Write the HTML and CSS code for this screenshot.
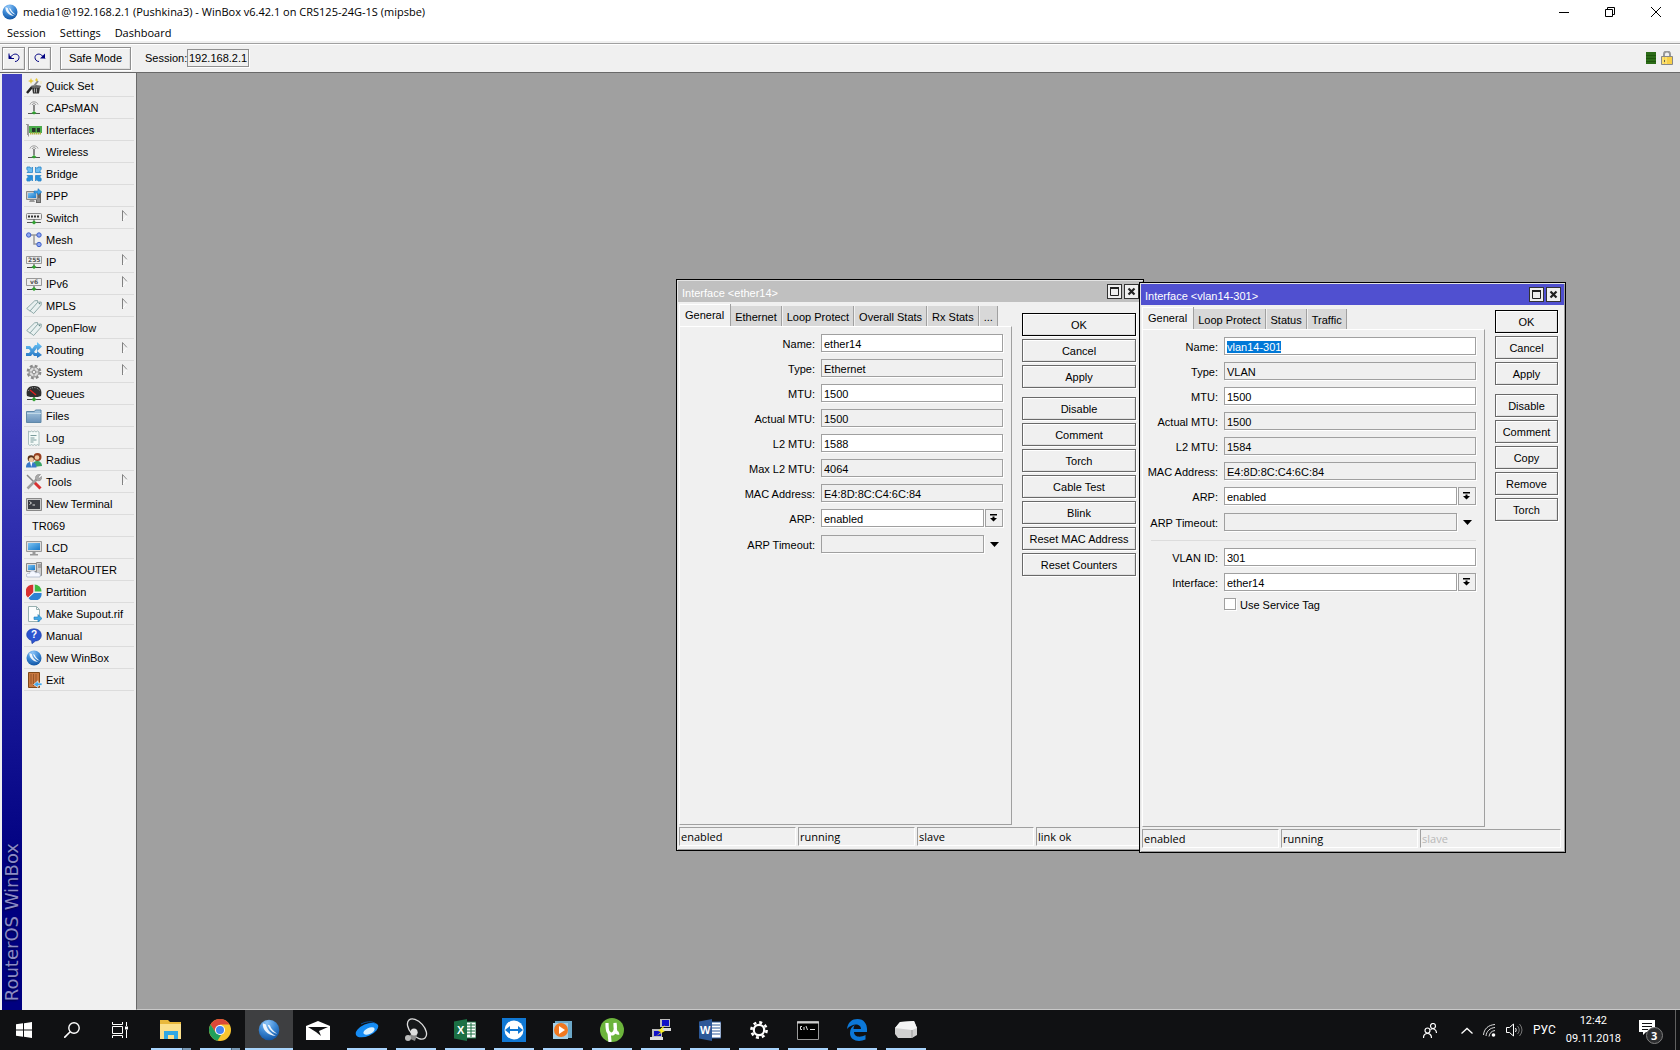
FILE: index.html
```html
<!DOCTYPE html>
<html lang="en">
<head>
<meta charset="utf-8">
<title>media1@192.168.2.1 (Pushkina3) - WinBox v6.42.1 on CRS125-24G-1S (mipsbe)</title>
<link rel="stylesheet" href="styles.css">
</head>
<body>
<svg class="defs" aria-hidden="true">
  <defs>
    <radialGradient id="g-ball" cx=".4" cy=".15" r=".9"><stop offset="0" stop-color="#8cc4f8"/><stop offset=".5" stop-color="#3c88d4"/><stop offset="1" stop-color="#0c50a0"/></radialGradient>
    <linearGradient id="g-screen" x1="0" y1="0" x2="1" y2="1"><stop offset="0" stop-color="#7cc4f4"/><stop offset="1" stop-color="#1878c8"/></linearGradient>
    <linearGradient id="g-folder" x1="0" y1="0" x2="0" y2="1"><stop offset="0" stop-color="#a8c8e0"/><stop offset="1" stop-color="#6890b8"/></linearGradient>
    <linearGradient id="g-arrow" x1="0" y1="0" x2="0" y2="1"><stop offset="0" stop-color="#70c8f8"/><stop offset="1" stop-color="#2070c0"/></linearGradient>
    <symbol id="i-winbox" viewBox="0 0 16 16"><circle cx="8" cy="8" r="7.5" fill="url(#g-ball)"/><path d="M3.500 3c-.4 4.500 3 8.500 9.500 9.300-3.200-1.500-6.500-4.300-7.200-8.300M7 4c1 3.500 3.500 6 7 6.800-2.500-1.600-4.500-3.500-5.300-6" fill="#fff" opacity=".9"/></symbol>
    <symbol id="i-wand" viewBox="0 0 16 16"><path d="M1 15 6 9" stroke="#222" stroke-width="2.500"/><path d="M6 9h8l-1 6.500H7z" fill="#333"/><path d="M8.500 10.500v4M10.500 10.500v4" stroke="#aaa"/><ellipse cx="10" cy="8.500" rx="5" ry="1.500" fill="#666"/><path d="m8 8 4-5" stroke="#888" stroke-width="2"/><path d="m5 .5.7 1.800 1.800.7-1.800.7L5 5.500l-.7-1.800L2.500 3l1.800-.7zM10.500 0l.5 1.500 1 .5-1 .5-.5 1-.5-1-1-.5 1-.5zM15 3v3" fill="#e8c830" stroke="#e8c830" stroke-width=".3"/></symbol>
    <symbol id="i-antenna" viewBox="0 0 16 16"><path d="M4 4.500c1-3.500 7-3.500 8 0M6 5c.6-1.800 3.400-1.800 4 0" fill="none" stroke="#999"/><path d="M7 5h2v6H7z" fill="#888"/><path d="M2 13.500h12" stroke="#555"/><path d="m8 11 2.500 2L8 14.500 5.500 13z" fill="#30a030"/></symbol>
    <symbol id="i-card" viewBox="0 0 16 16"><path d="M0 2.500h2.500v12M1.500 3v10" fill="none" stroke="#999"/><path d="M3 4h13v7H3z" fill="#4caa4c"/><path d="M6 6h3.500v4H6zM11 6h3v4h-3z" fill="#26382a"/><path d="M4 11.500h11" stroke="#b0b040" stroke-width="2" stroke-dasharray="1.500 .5"/></symbol>
    <symbol id="i-bridge" viewBox="0 0 16 16"><g fill="#6cbcf0" stroke="#2884c8" stroke-width=".8"><path d="M1 1h3l1 1.500L6.500 1v5.500H1L2.500 5 .8 3.500z"/><path d="M15 1h-3l-1 1.500L9.500 1v5.500H15L13.500 5l1.700-1.500z"/><path fill="#2890dc" d="M1 15h3l1-1.500L6.500 15V9.500H1L2.500 11 .8 12.500zM15 15h-3l-1-1.500L9.500 15V9.500H15L13.500 11l1.700 1.500z"/></g></symbol>
    <symbol id="i-ppp" viewBox="0 0 16 16"><path d="M10 4h5v11h-5z" fill="#666"/><path d="M11 11h3M11 13h3" stroke="#bbb"/><path d="M.5 3.500h11v8H.5z" fill="#ccc" stroke="#888"/><path d="M2 5h8v5H2z" fill="url(#g-screen)"/><path d="M4 12h4l1 2H3z" fill="#999"/><path d="M8 3h4V.7L15.700 4 12 7V5H8z" fill="#40a4ec" stroke="#1870b8" stroke-width=".6"/></symbol>
    <symbol id="i-switch" viewBox="0 0 16 16"><rect x=".5" y="3.500" width="15" height="6" rx="1" fill="#eee" stroke="#888"/><path d="M2 6.500h12" stroke="#333" stroke-width="2" stroke-dasharray="2 1"/><path d="M1 12.500h14M8 9v4" stroke="#555"/><path d="m8 10.500 2.500 2-2.500 2-2.500-2z" fill="#30a030"/></symbol>
    <symbol id="i-mesh" viewBox="0 0 16 16"><path d="M4 3h8M8 3v9h4" fill="none" stroke="#999" stroke-width="1.500"/><g fill="#90a8f0" stroke="#4060c8"><circle cx="2.700" cy="3" r="2.200"/><circle cx="13" cy="3" r="2.200"/><circle cx="13" cy="12.500" r="2.200"/></g></symbol>
    <symbol id="i-plate" viewBox="0 0 16 16"><path d="M.5 2.500h15v7H.5z" fill="#eee" stroke="#999"/><path d="M1 13.500h14M8 10v3" stroke="#444"/><path d="m8 11 2.500 2L8 15l-2.500-2z" fill="#30a030"/></symbol>
    <symbol id="i-tags" viewBox="0 0 16 16"><g fill="#e8f0f0" stroke="#789898" stroke-width=".8"><path d="m.7 10.500 8-7.700 2.800-.3.300 2.500-7.500 8.300z"/><path d="m4.200 12.800 7.500-8.500 3.500-.3v3l-7.500 8.500z"/></g><circle cx="13.500" cy="5.500" r=".8" fill="#688"/></symbol>
    <symbol id="i-routing" viewBox="0 0 16 16"><path d="M0 4h4l5 7h2V9l5 4-5 3v-2H8L3 7H0zM0 11h3l6-8h2V0l5 4.500L11 9V6l-6 8H0z" fill="url(#g-arrow)"/></symbol>
    <symbol id="i-gear" viewBox="0 0 16 16"><circle cx="8" cy="8" r="6.300" fill="none" stroke="#888" stroke-width="2.200" stroke-dasharray="2.800 2.150"/><circle cx="8" cy="8" r="5" fill="#ddd" stroke="#888"/><circle cx="8" cy="8" r="1.800" fill="#eee" stroke="#888"/><path d="M8 3v3M8 10v3M3 8h3M10 8h3" stroke="#999"/></symbol>
    <symbol id="i-gauge" viewBox="0 0 16 16"><path d="M1 10C-1 1 5 0 8 0s9 1 7 10c-4 1.600-10 1.600-14 0z" fill="#303030"/><path d="M2 5c3-4.500 9-4.500 12 0" fill="none" stroke="#aaa" stroke-dasharray="1 1.500"/><path d="m4 4 6 5" stroke="#e02020" stroke-width="1.300"/><path d="M1 13.500h14M8 11v2" stroke="#444"/><path d="m8 11 2.500 2.500-2.500 2-2.500-2z" fill="#30a030"/></symbol>
    <symbol id="i-folder" viewBox="0 0 16 16"><path d="M.5 3.500h8l1-1.500h5.500v12.500H.5z" fill="url(#g-folder)" stroke="#6088a8"/><path d="M1 5.500h14" stroke="#c0d8e8"/></symbol>
    <symbol id="i-log" viewBox="0 0 16 16"><path d="m2.500 1 1.500 1 1.500-1L7 2l1.500-1L10 2l1.500-1L13 2v13.500l-1.500-1-1.500 1-1.500-1-1.500 1-1.500-1-1.500 1-1.500-1z" fill="#f4faf8" stroke="#98b0b0" stroke-width=".8"/><path d="M4.500 5.500h6M4.500 8h4M4.500 10h6M4.500 12h3" stroke="#7a9c9c"/></symbol>
    <symbol id="i-users" viewBox="0 0 16 16"><path d="M7 15c0-4 1-6 4-6s5 2 5 5z" fill="#3ca468"/><circle cx="11.500" cy="5" r="4" fill="#984020"/><circle cx="11" cy="5.500" r="2.300" fill="#f0c8a0"/><path d="M0 15.500c0-4 2-5.500 5-5.500s5.500 1.500 5.500 5.500z" fill="#3878c8"/><circle cx="5" cy="6.500" r="3.300" fill="#583018"/><circle cx="5.300" cy="7.800" r="2.500" fill="#f0c8a0"/><path d="m4 10 1.300 5 1.300-5z" fill="#fff"/></symbol>
    <symbol id="i-tools" viewBox="0 0 16 16"><path d="m1 1 7 7" stroke="#888" stroke-width="1.500"/><path d="m8.500 8.500 6 6" stroke="#d83030" stroke-width="3"/><path d="m1.500 14.500 9-9" stroke="#a0a0a0" stroke-width="2.500"/><path d="M10 6c-2-4 2-6.500 4.500-5.500L12 3l1 1.500 2.500-2C16.500 6 13 8 10 6z" fill="#aaa" stroke="#777" stroke-width=".5"/></symbol>
    <symbol id="i-term" viewBox="0 0 16 16"><path d="M.5 2.500h15v12H.5z" fill="#ccc" stroke="#888"/><path d="M2 4h12v9H2z" fill="#3a3c44"/><path d="m3.500 5.500 2 1.500-2 1.500M6.500 9h2.500" fill="none" stroke="#ddd"/></symbol>
    <symbol id="i-lcd" viewBox="0 0 16 16"><path d="M.5 1.500h15v10H.5z" fill="#ddd" stroke="#999"/><path d="M2 3h12v7H2z" fill="url(#g-screen)"/><path d="M6.500 12h3v2H12v1.500H4V14h2.500z" fill="#999"/></symbol>
    <symbol id="i-meta" viewBox="0 0 16 16"><path d="M10.500.5h5v13h-5z" fill="#ccc" stroke="#888"/><path d="M12 3h3M12 5h3" stroke="#777"/><path d="M.5 1.500h10v8H.5z" fill="#ddd" stroke="#888"/><path d="M2 3h7v5H2z" fill="url(#g-screen)"/><path d="M1 15c-2-3 1-4 2.500-3.500C4 8 9 8 9.500 11c3-1.500 6 .5 4.500 4z" fill="#f4f7ff" stroke="#a0acc0" stroke-width=".7"/></symbol>
    <symbol id="i-pie" viewBox="0 0 16 16"><path d="M7.500 8V.7A7.300 7.300 0 0 0 2 13.500z" fill="#d83030"/><path d="M8.500 7.500V.5a7 7 0 0 1 7 7z" fill="#40b840"/><path d="M8 8.500h7.500A7.300 7.300 0 0 1 2.500 14z" fill="#2c80d4"/><path d="M8 .5v8h8M8 8.500l-5.500 5" fill="none" stroke="#f0f0f0"/></symbol>
    <symbol id="i-supout" viewBox="0 0 16 16"><path d="M2.500.5h8l3 3v12h-11z" fill="#fbfdfd" stroke="#98b0b0"/><path d="M10.500.5v3h3" fill="none" stroke="#98b0b0"/><path d="M8 11h4V8.500l4 4-4 3.500v-2.500H8z" fill="#40a8e8" stroke="#1c78b8" stroke-width=".6"/></symbol>
    <symbol id="i-help" viewBox="0 0 16 16"><path d="M8 .8c9.500 0 9.500 12 1.500 12.200L6 15.700 5.500 12.500C-2 10-.5.800 8 .8z" fill="#2c54d0" stroke="#1c3ca0" stroke-width=".6"/></symbol>
    <symbol id="i-exit" viewBox="0 0 16 16"><path d="M2.500.5h11v15h-11z" fill="#c87840" stroke="#804818"/><path d="M5 2v10M7.500 2v12M10 2v10" stroke="#98562a"/><path d="M16 11h-4V8.800L7.500 12.500l4.500 3V13.500h4z" fill="#48a8e8" stroke="#fff" stroke-width=".6"/></symbol>
    <symbol id="i-sub" viewBox="0 0 6 11"><path d="M.5 11V.5" stroke="#808080"/><path d="m.5.5 4.500 5" fill="none" stroke="#909090"/><path d="m5 5.500L1 10" stroke="#fff"/></symbol>
    <symbol id="i-drop" viewBox="0 0 8 8"><path d="M0 0h7v1.500H0zM2.500 2.500h2V4H7L3.500 7.500 0 4h2.500z"/></symbol>
    <symbol id="i-tri" viewBox="0 0 9 5"><path d="M0 0h9L4.500 5z"/></symbol>
    <symbol id="i-max" viewBox="0 0 9 9"><path d="M.5 1h8v7.500h-8z" fill="none" stroke="#222"/><path d="M0 1h9" stroke="#222" stroke-width="2"/></symbol>
    <symbol id="i-close" viewBox="0 0 9 9"><path d="m1.500 1.500 6 6m0-6-6 6" stroke="#222" stroke-width="2.200"/></symbol>
  </defs>
</svg>

<header class="titlebar">
  <svg class="ico"><use href="#i-winbox"/></svg>
  <h1>media1@192.168.2.1 (Pushkina3) - WinBox v6.42.1 on CRS125-24G-1S (mipsbe)</h1>
  <div class="caption">
    <button aria-label="Minimize"><svg width="10" height="10"><path d="M0 5.500h10" stroke="#000"/></svg></button>
    <button aria-label="Restore"><svg width="10" height="10"><path d="M.5 2.500h7v7h-7zM2.500 2V.5h7v7H8" fill="none" stroke="#000"/></svg></button>
    <button aria-label="Close"><svg width="10" height="10"><path d="m0 0 10 10M10 0 0 10" stroke="#000"/></svg></button>
  </div>
</header>
<nav class="menubar"><a href="#">Session</a><a href="#">Settings</a><a href="#">Dashboard</a></nav>
<div class="toolbar">
  <button class="btn tool" aria-label="Undo"><svg width="12" height="12"><path d="M1 1.500v5h5" fill="none" stroke="#000080"/><path d="M1 6.500 4.500 3c3-2 6.500-.5 6.500 2.500 0 2-1.500 4-4 4" fill="none" stroke="#000080"/><path d="M1 3v3.500h3.500z" fill="#000080"/></svg></button>
  <button class="btn tool" aria-label="Redo"><svg width="12" height="12"><path d="M11 6.500 7.500 3C4.500 1 1 2.500 1 5.500c0 2 1.500 4 4 4" fill="none" stroke="#000080"/><path d="M11 1.500v5H6z" fill="#000080"/></svg></button>
  <button class="btn safe">Safe Mode</button>
  <label for="session">Session:</label><input id="session" class="session" value="192.168.2.1" readonly>
  <span class="lights">
    <svg width="10" height="12"><path d="M0 0h10v12H0z" fill="#2c6c18"/><path d="M0 3.500h10M0 6.500h10M0 9.500h10" stroke="#184808" stroke-opacity=".6"/></svg>
    <svg width="12" height="14"><path d="M3 6V3q0-2.500 3-2.500T9 3v3" fill="none" stroke="#999" stroke-width="2"/><path d="M.5 5.500h11v8H.5z" fill="#f8d048" stroke="#888"/><path d="M2 6v7M5 6v7" stroke="#fff098"/><path d="M3.500 9v2" stroke="#664"/></svg>
  </span>
</div>

<main class="work">
  <div class="brand"><span>RouterOS WinBox</span></div>
  <nav class="side">
    <a href="#"><svg class="ico"><use href="#i-wand"/></svg>Quick Set</a>
    <a href="#"><svg class="ico"><use href="#i-antenna"/></svg>CAPsMAN</a>
    <a href="#"><svg class="ico"><use href="#i-card"/></svg>Interfaces</a>
    <a href="#"><svg class="ico"><use href="#i-antenna"/></svg>Wireless</a>
    <a href="#"><svg class="ico"><use href="#i-bridge"/></svg>Bridge</a>
    <a href="#"><svg class="ico"><use href="#i-ppp"/></svg>PPP</a>
    <a href="#"><svg class="ico"><use href="#i-switch"/></svg>Switch<svg class="sub"><use href="#i-sub"/></svg></a>
    <a href="#"><svg class="ico"><use href="#i-mesh"/></svg>Mesh</a>
    <a href="#"><svg class="ico"><use href="#i-plate"/><text x="2" y="8" class="plate">255</text></svg>IP<svg class="sub"><use href="#i-sub"/></svg></a>
    <a href="#"><svg class="ico"><use href="#i-plate"/><text x="4" y="8" class="plate">v6</text></svg>IPv6<svg class="sub"><use href="#i-sub"/></svg></a>
    <a href="#"><svg class="ico"><use href="#i-tags"/></svg>MPLS<svg class="sub"><use href="#i-sub"/></svg></a>
    <a href="#"><svg class="ico"><use href="#i-tags"/></svg>OpenFlow</a>
    <a href="#"><svg class="ico"><use href="#i-routing"/></svg>Routing<svg class="sub"><use href="#i-sub"/></svg></a>
    <a href="#"><svg class="ico"><use href="#i-gear"/></svg>System<svg class="sub"><use href="#i-sub"/></svg></a>
    <a href="#"><svg class="ico"><use href="#i-gauge"/></svg>Queues</a>
    <a href="#"><svg class="ico"><use href="#i-folder"/></svg>Files</a>
    <a href="#"><svg class="ico"><use href="#i-log"/></svg>Log</a>
    <a href="#"><svg class="ico"><use href="#i-users"/></svg>Radius</a>
    <a href="#"><svg class="ico"><use href="#i-tools"/></svg>Tools<svg class="sub"><use href="#i-sub"/></svg></a>
    <a href="#"><svg class="ico"><use href="#i-term"/></svg>New Terminal</a>
    <a href="#" class="plain">TR069</a>
    <a href="#"><svg class="ico"><use href="#i-lcd"/></svg>LCD</a>
    <a href="#"><svg class="ico"><use href="#i-meta"/></svg>MetaROUTER</a>
    <a href="#"><svg class="ico"><use href="#i-pie"/></svg>Partition</a>
    <a href="#"><svg class="ico"><use href="#i-supout"/></svg>Make Supout.rif</a>
    <a href="#"><svg class="ico"><use href="#i-help"/><text x="5" y="10" class="qmark">?</text></svg>Manual</a>
    <a href="#"><svg class="ico"><use href="#i-winbox"/></svg>New WinBox</a>
    <a href="#"><svg class="ico"><use href="#i-exit"/></svg>Exit</a>
  </nav>

  <div class="desk">
    <section class="win win-ether">
      <header class="wtitle"><h2>Interface &lt;ether14&gt;</h2><button aria-label="Maximize"><svg class="wico"><use href="#i-max"/></svg></button><button aria-label="Close"><svg class="wico"><use href="#i-close"/></svg></button></header>
      <div class="wbody">
        <div class="pane">
          <div class="tabs"><button class="on">General</button><button>Ethernet</button><button>Loop Protect</button><button>Overall Stats</button><button>Rx Stats</button><button>...</button></div>
          <form class="form">
            <label for="e1">Name:</label><input id="e1" value="ether14">
            <label for="e2">Type:</label><input id="e2" value="Ethernet" readonly>
            <label for="e3">MTU:</label><input id="e3" value="1500">
            <label for="e4">Actual MTU:</label><input id="e4" value="1500" readonly>
            <label for="e5">L2 MTU:</label><input id="e5" value="1588">
            <label for="e6">Max L2 MTU:</label><input id="e6" value="4064" readonly>
            <label for="e7">MAC Address:</label><input id="e7" value="E4:8D:8C:C4:6C:84" readonly>
            <label for="e8">ARP:</label><div class="combo"><select id="e8"><option>enabled</option></select><button type="button" aria-label="Open ARP list"><svg width="8" height="8"><use href="#i-drop"/></svg></button></div>
            <label for="e9" class="low">ARP Timeout:</label><div class="combo opt"><input id="e9" readonly><button type="button" aria-label="Set ARP timeout"><svg width="9" height="5"><use href="#i-tri"/></svg></button></div>
          </form>
        </div>
        <div class="actions">
          <button class="btn main">OK</button><button class="btn">Cancel</button><button class="btn">Apply</button>
          <button class="btn split">Disable</button><button class="btn">Comment</button><button class="btn">Torch</button><button class="btn">Cable Test</button><button class="btn">Blink</button><button class="btn">Reset MAC Address</button><button class="btn">Reset Counters</button>
        </div>
      </div>
      <footer class="status"><span>enabled</span><span>running</span><span>slave</span><span>link ok</span></footer>
    </section>

    <section class="win win-vlan">
      <header class="wtitle"><h2>Interface &lt;vlan14-301&gt;</h2><button aria-label="Maximize"><svg class="wico"><use href="#i-max"/></svg></button><button aria-label="Close"><svg class="wico"><use href="#i-close"/></svg></button></header>
      <div class="wbody">
        <div class="pane">
          <div class="tabs"><button class="on">General</button><button>Loop Protect</button><button>Status</button><button>Traffic</button></div>
          <form class="form">
            <label for="v1">Name:</label><input id="v1" value="vlan14-301">
            <label for="v2">Type:</label><input id="v2" value="VLAN" readonly>
            <label for="v3">MTU:</label><input id="v3" value="1500">
            <label for="v4">Actual MTU:</label><input id="v4" value="1500" readonly>
            <label for="v5">L2 MTU:</label><input id="v5" value="1584" readonly>
            <label for="v6">MAC Address:</label><input id="v6" value="E4:8D:8C:C4:6C:84" readonly>
            <label for="v7">ARP:</label><div class="combo"><select id="v7"><option>enabled</option></select><button type="button" aria-label="Open ARP list"><svg width="8" height="8"><use href="#i-drop"/></svg></button></div>
            <label for="v8" class="low">ARP Timeout:</label><div class="combo opt"><input id="v8" readonly><button type="button" aria-label="Set ARP timeout"><svg width="9" height="5"><use href="#i-tri"/></svg></button></div>
            <hr>
            <label for="v9">VLAN ID:</label><input id="v9" value="301">
            <label for="v10">Interface:</label><div class="combo"><select id="v10"><option>ether14</option></select><button type="button" aria-label="Open interface list"><svg width="8" height="8"><use href="#i-drop"/></svg></button></div>
            <div class="check"><input type="checkbox" id="v11"><label for="v11">Use Service Tag</label></div>
          </form>
        </div>
        <div class="actions">
          <button class="btn main">OK</button><button class="btn">Cancel</button><button class="btn">Apply</button>
          <button class="btn split">Disable</button><button class="btn">Comment</button><button class="btn">Copy</button><button class="btn">Remove</button><button class="btn">Torch</button>
        </div>
      </div>
      <footer class="status"><span>enabled</span><span>running</span><span class="off">slave</span></footer>
    </section>
  </div>
</main>

<footer class="taskbar">
  <div class="sys">
    <button aria-label="Start"><svg width="16" height="16"><path d="M0 2.300 7 1.300v6.200H0zM8 1.200 16 0v7.500H8zM0 8.500h7v6.200l-7-1zM8 8.500h8V16l-8-1.200z" fill="#fff"/></svg></button>
    <button aria-label="Search"><svg width="16" height="16"><circle cx="10" cy="6" r="5.200" fill="none" stroke="#fff" stroke-width="1.400"/><path d="m6.200 9.800-6 6" stroke="#fff" stroke-width="1.600"/></svg></button>
    <button aria-label="Task view"><svg width="16" height="16"><path d="M.5 0v2.500h10V0M.5 16v-2.500h10V16M.5 4.500h10v7H.5zM14.500 0v4M14.500 8v8" fill="none" stroke="#fff"/><path d="M13 4.500h3v3h-3z" fill="#fff"/></svg></button>
  </div>
  <div class="apps">
    <button class="run multi" aria-label="Explorer"><svg width="22" height="20"><path d="M0 2V0h8l2 2h11v17H0z" fill="#e8b83c"/><path d="M0 4h21v15H0z" fill="#fbe08c"/><path d="M4 19v-8h14v8h-4v-4H8v4z" fill="#30a8e4"/></svg></button>
    <button class="run multi" aria-label="Chrome"><svg width="22" height="22"><circle cx="11" cy="11" r="11" fill="#f8c430"/><path d="M1.500 5.500A11 11 0 0 1 20.500 5.500H11L6.500 13.500z" fill="#dc4838"/><path d="M1.500 5.500 7 14l5 2-3.500 5.700A11 11 0 0 1 1.500 5.500z" fill="#20a05c"/><circle cx="11" cy="11" r="5" fill="#fff"/><circle cx="11" cy="11" r="4" fill="#4484f0"/></svg></button>
    <button class="run active" aria-label="WinBox"><svg width="22" height="22"><use href="#i-winbox"/></svg></button>
    <button aria-label="Mail"><svg width="24" height="19"><path d="M0 5 12 0l12 5v14H0z" fill="#fff"/><path d="M2 6h20l-9 4 2 5-5-4z" fill="#101113"/></svg></button>
    <button class="run" aria-label="Cloud"><svg width="24" height="18"><ellipse cx="12" cy="9" rx="12" ry="6" transform="rotate(-24 12 9)" fill="#168cf4"/><ellipse cx="14" cy="10" rx="6" ry="3" transform="rotate(-24 14 10)" fill="#d8f0ff"/><path d="M6 3q8-4 14-1" stroke="#0c4c90" fill="none"/></svg></button>
    <button class="run" aria-label="Dish"><svg width="24" height="24"><ellipse cx="13" cy="11" rx="12" ry="7" transform="rotate(48 13 11)" fill="#16181a" stroke="#ddd" stroke-width="1.300"/><path d="m4 20 6-8 4 2-3 9" fill="#888"/><circle cx="10" cy="14" r="3.500" fill="#ddd"/><circle cx="4" cy="20" r="3" fill="#bbb"/></svg></button>
    <button class="run" aria-label="Excel"><svg width="22" height="22"><path d="M12 3h10v16H12z" fill="#fff" stroke="#1c7044"/><path d="M13 6h8M13 9h8M13 12h8M13 15h8M17 4v14" stroke="#1c7044"/><path d="M0 2.500 13 0v22L0 19.500z" fill="#1c7044"/><text x="3" y="15" class="app-letter">X</text></svg></button>
    <button class="run" aria-label="TeamViewer"><svg width="24" height="24"><path d="M0 0h24v24H0z" fill="#1078d4"/><circle cx="12" cy="12" r="9.500" fill="#fff"/><path d="m3 12 5-4v3h8V8l5 4-5 4v-3H8v3z" fill="#1078d4"/></svg></button>
    <button class="run" aria-label="Media player"><svg width="20" height="20"><path d="M2 1h17v17H2z" fill="#6ca8c8"/><path d="M0 3h15v16H0z" fill="#a4d0e8"/><circle cx="8" cy="10" r="7" fill="#f07820"/><path d="m6 6 6 4-6 4z" fill="#fff"/></svg></button>
    <button class="run" aria-label="Torrent"><svg width="24" height="24"><circle cx="12" cy="12" r="12" fill="#6cb43c"/><path d="M7 5c0 8 1 11 4.500 11S16 11 15 5c0 8 1 11 4 10M9 14l1 10" fill="none" stroke="#fff" stroke-width="3.200"/></svg></button>
    <button class="run" aria-label="PuTTY"><svg width="22" height="22"><path d="M10 0h10v8H10zM2 10h10v8H2z" fill="#bbb"/><path d="M12 1h7v6h-7zM4 12h7v5H4z" fill="#1010c8"/><path d="M11 9h10v3H11zM0 18h13v3H0z" fill="#ddd"/><path d="m15 6-7 6 3 1-5 4 9-5-3-1z" fill="#f8f020"/></svg></button>
    <button class="run" aria-label="Word"><svg width="22" height="22"><path d="M12 3h10v16H12z" fill="#fff" stroke="#2c5898"/><path d="M13 6h8M13 9h8M13 12h8M13 15h8" stroke="#2c5898"/><path d="M0 2.500 13 0v22L0 19.500z" fill="#2c5898"/><text x="1" y="15" class="app-letter">W</text></svg></button>
    <button class="run" aria-label="Settings"><svg width="18" height="18"><circle cx="9" cy="9" r="7.600" fill="none" stroke="#fff" stroke-width="2.600" stroke-dasharray="3 2.970"/><circle cx="9" cy="9" r="5.200" fill="none" stroke="#fff" stroke-width="2.200"/></svg></button>
    <button class="run" aria-label="Command prompt"><svg width="22" height="19"><path d="M.5.5h21v18H.5z" fill="#000" stroke="#999"/><path d="M0 1.500h22" stroke="#ccc" stroke-width="2"/><path d="M5 5.500H3.500v3H5M7 6v3M9 5l1.500 4M13 8.500h5" fill="none" stroke="#ddd"/></svg></button>
    <button class="run" aria-label="Edge"><svg width="20" height="22"><path d="M0 10C1 3 5 0 10.500 0 17 0 20 5 20 10v3H7c0 5 6 6 11.500 3v4.500C12 23.500 3 22 3 14c0-4 2-6.500 5-8-1 1-1.500 2.500-1.500 4H14c0-6-9-6-14 0z" fill="#0c78d8"/></svg></button>
    <button class="run" aria-label="Printer"><svg width="22" height="18"><path d="m5 1 14-1 3 7v7l-5 3H3l-3-4V7z" fill="#d0d0d0"/><path d="m5 1 14-1 3 7-5 2L0 7z" fill="#f4f4f4"/><path d="M17 9v8" stroke="#999"/></svg></button>
  </div>
  <div class="tray">
    <svg class="people" width="14" height="15"><g fill="none" stroke="#fff" stroke-width="1.200"><circle cx="10" cy="3" r="2.500"/><circle cx="4.500" cy="7.500" r="2.500"/><path d="M.5 15c0-6 8-6 8 0M7.500 6.500c3-2 6 .5 6 3.500"/></g></svg>
    <svg width="12" height="7"><path d="m.5 6.500 5.500-5 5.500 5" fill="none" stroke="#fff" stroke-width="1.300"/></svg>
    <svg width="13" height="13"><g fill="none" stroke="#ddd"><path d="M.5 11C1 5 5 1 12 .5M3 12c.5-5 4-8 9-8.500M6 12.500C6.500 9 8.500 7 12 6.500"/></g><circle cx="10.500" cy="11" r="1.800" fill="#fff"/></svg>
    <svg width="17" height="14"><path d="M.5 4.500h3l4-3.500v12l-4-3.500h-3z" fill="none" stroke="#fff"/><path d="M9.500 5q1.500 2 0 4" stroke="#fff" fill="none"/><path d="M11.500 3q3.500 4 0 8M13.500 1q5 6 0 12" stroke="#777" fill="none"/></svg>
    <span class="lang">РУС</span>
    <time>12:42<br>09.11.2018</time>
    <button class="notes" aria-label="Notifications"><svg width="26" height="26"><path d="M0 1h16v12H7l-3 3v-3H0z" fill="#fff"/><path d="M3 4.500h10M3 7.500h10M3 10.500h6" stroke="#101113"/><circle cx="15.500" cy="16.500" r="8" fill="#2c2d2f" stroke="#808080"/><text x="12" y="21" class="count">3</text></svg></button>
    <i class="peek"></i>
  </div>
</footer>
<script>
  const nameField = document.getElementById('v1');
  nameField.focus({ preventScroll: true });
  nameField.select();
</script>
</body>
</html>
```
FILE: styles.css
```css
* { box-sizing: border-box; }
body {
  margin: 0;
  min-height: 100vh;
  display: flex;
  flex-direction: column;
  background: #f0f0f0;
  color: #000;
  font: 11px/16px "Liberation Sans", Arial, sans-serif;
}
button, input, select { font: inherit; color: inherit; margin: 0; outline: none; }
button { padding: 0; border: 0; background: none; white-space: nowrap; }
a { color: inherit; text-decoration: none; }
h1, h2 { margin: 0; font: inherit; }
svg { flex: none; display: block; }
.defs { position: absolute; width: 0; height: 0; }
.ico { width: 16px; height: 16px; }

.titlebar, .menubar { background: #fff; font: 11px/16px "Open Sans", sans-serif; }
.titlebar { display: flex; align-items: center; height: 23px; padding-left: 2px; gap: 5px; }
.caption { display: flex; margin-left: auto; padding-right: 1px; }
.caption button { width: 46px; height: 20px; display: grid; place-items: center; }
.menubar { display: flex; gap: 14px; padding: 2px 7px 0; height: 18px; }

.toolbar {
  display: flex;
  align-items: center;
  height: 32px;
  padding: 3px 7px 0 2px;
  border-bottom: 1px solid #696969;
  background: linear-gradient(#f0f0f0 2px, #a0a0a0 2px, #a0a0a0 3px, #fff 3px, #fff 4px, #f0f0f0 4px);
}
.btn {
  height: 23px;
  border: 1px solid #696969;
  background: #f0f0f0;
  box-shadow: inset 1px 1px #fff, inset -1px -1px #e0e0e0, 1px 1px #fff;
}
.toolbar .btn { border-color: #909090; }
.tool { width: 23px; margin-right: 3px; display: grid; place-items: center; }
.safe { width: 71px; margin: 0 14px 0 6px; }
.toolbar label { width: 42px; }
.session { width: 62px; height: 18px; padding: 0 1px; border: 1px solid #909090; background: #f0f0f0; box-shadow: 1px 1px #fff; }
.lights { display: flex; align-items: center; gap: 5px; margin-left: auto; }

.work { flex: 1; display: flex; }
.brand {
  width: 20px;
  margin: 1px 2px 0;
  display: flex;
  align-items: flex-end;
  background: linear-gradient(#4040c0 35%, #000080 85%);
}
.brand span {
  writing-mode: vertical-rl;
  transform: rotate(180deg);
  padding-top: 9px;
  font: 18px/20px "DejaVu Sans", sans-serif;
  color: #8c8cc4;
  text-shadow: -1px -1px 2px #000040;
}
.side { width: 110px; margin-right: 2px; padding-top: 2px; }
.side a { display: flex; align-items: center; gap: 4px; height: 22px; padding-left: 2px; border-bottom: 1px solid #dcdcdc; white-space: nowrap; }
.side .plain { padding-left: 8px; }
.side .sub { width: 6px; height: 11px; margin: 0 6px 4px auto; }
.plate { font: bold 6px "DejaVu Sans", sans-serif; fill: #555; }
.qmark { font: bold 10px "Liberation Sans", sans-serif; fill: #fff; }

.desk { position: relative; flex: 1; background: #a0a0a0; border-left: 1px solid #696969; border-bottom: 1px solid #c8c8c8; }
.win {
  position: absolute;
  display: flex;
  flex-direction: column;
  padding: 1px;
  border: 1px solid #000;
  background: #f0f0f0;
  box-shadow: inset 1px 1px #e3e3e3, inset -1px -1px #a0a0a0;
}
.win-ether { left: 539px; top: 206px; width: 468px; height: 572px; }
.win-vlan { left: 1002px; top: 209px; width: 427px; height: 571px; }
.wtitle { display: flex; align-items: center; gap: 2px; height: 21px; padding: 0 3px 0 4px; background: #c0c0c0; color: #fff; }
.win-vlan .wtitle { background: #5050d0; }
.wtitle h2 { flex: 1; padding-top: 3px; }
.wtitle button { width: 15px; height: 15px; display: grid; place-items: center; background: #f0f0f0; border: 1px solid #333; margin-bottom: 1px; }
.wico { width: 9px; height: 9px; }
.wbody { flex: 1; display: flex; padding: 2px 6px 0 1px; gap: 10px; }
.pane { flex: 1; min-width: 0; display: flex; flex-direction: column; }
.tabs { display: flex; align-items: flex-end; height: 22px; }
.tabs button { height: 20px; padding: 2px 4px 0; margin-right: 1px; background: #d8d8d8; border-right: 1px solid #a0a0a0; }
.tabs .on { height: 22px; margin: 0; padding: 0 6px; background: #f0f0f0; box-shadow: inset 1px 1px #fff; }
.form {
  flex: 1;
  display: grid;
  align-content: start;
  gap: 7px 6px;
  padding: 7px 8px 0 0;
  border: 1px solid;
  border-color: #fff #a0a0a0 #a0a0a0 #fff;
}
.win-ether .form { grid-template-columns: 135px 1fr; }
.win-vlan .form { grid-template-columns: 75px 1fr; }
.form > label { text-align: right; white-space: nowrap; line-height: 20px; height: 18px; }
.form > .low { margin-top: 1px; }
.form input, .form select {
  appearance: none;
  width: 100%;
  min-width: 0;
  height: 18px;
  padding: 1px 2px 0;
  border: 1px solid #a0a0a0;
  border-radius: 0;
  background: #fff;
  box-shadow: 1px 1px #fff;
}
.form input:read-only:not([type="checkbox"]) { background: #f0f0f0; }
.form input::selection { background: #0078d7; color: #fff; }
.combo { display: flex; gap: 1px; }
.combo button { flex: none; width: 18px; height: 18px; display: grid; place-items: center; border: 1px solid #a0a0a0; box-shadow: 1px 1px #fff; }
.opt { margin-top: 1px; }
.opt button { border: 0; box-shadow: none; }
.form hr { grid-column: 1 / -1; width: auto; height: 1px; margin: 2px 0 0 8px; border: 0; background: #dcdcdc; }
.check { grid-column: 2; display: flex; gap: 4px; height: 12px; align-items: center; }
.form .check input { width: 12px; height: 12px; padding: 0; }
.check label { padding-top: 2px; }
.actions { display: flex; flex-direction: column; gap: 3px; width: 114px; padding-top: 9px; }
.win-vlan .actions { width: 63px; padding-top: 3px; }
.main { border-color: #000; }
.split { margin-top: 6px; }
.status { display: grid; grid-template-columns: repeat(3, 117px) 1fr; gap: 2px; padding: 2px 1px 3px; font: 11px/18px "Open Sans", sans-serif; }
.win-vlan .status { grid-template-columns: repeat(2, 137px) 1fr; padding-right: 3px; }
.status span { height: 19px; padding-left: 1px; border: 1px solid; border-color: #a0a0a0 #fff #fff #a0a0a0; }
.status .off { color: #b8b8b8; }

.taskbar { display: flex; height: 40px; background: #101113; color: #fff; font: 11px/18px Roboto, sans-serif; }
.sys, .apps { display: flex; }
.sys button { width: 48px; display: grid; place-items: center; }
.apps { gap: 1px; padding-left: 3px; }
.apps button { width: 48px; display: grid; place-items: center; background: no-repeat 50% 100% / 40px 2px; }
.apps .run { background-image: linear-gradient(#a8d4fc, #a8d4fc); }
.apps .multi { background-image: linear-gradient(90deg, #a8d4fc 31px, #4c6478 31px, #4c6478 32px, #7898b4 32px); }
.apps .active { background-color: #3e3f41; background-size: 100% 2px; }
.app-letter { font: bold 11px "Liberation Sans", sans-serif; fill: #fff; }
.tray { display: flex; align-items: center; gap: 10px; margin-left: auto; }
.people { margin-right: 14px; }
.lang { font-size: 12px; }
.tray time { text-align: center; }
.notes { margin: 4px 0 0 8px; }
.count { font: bold 11px "Open Sans", sans-serif; fill: #fff; }
.peek { width: 5px; height: 40px; border-left: 1px solid #606060; }
```
